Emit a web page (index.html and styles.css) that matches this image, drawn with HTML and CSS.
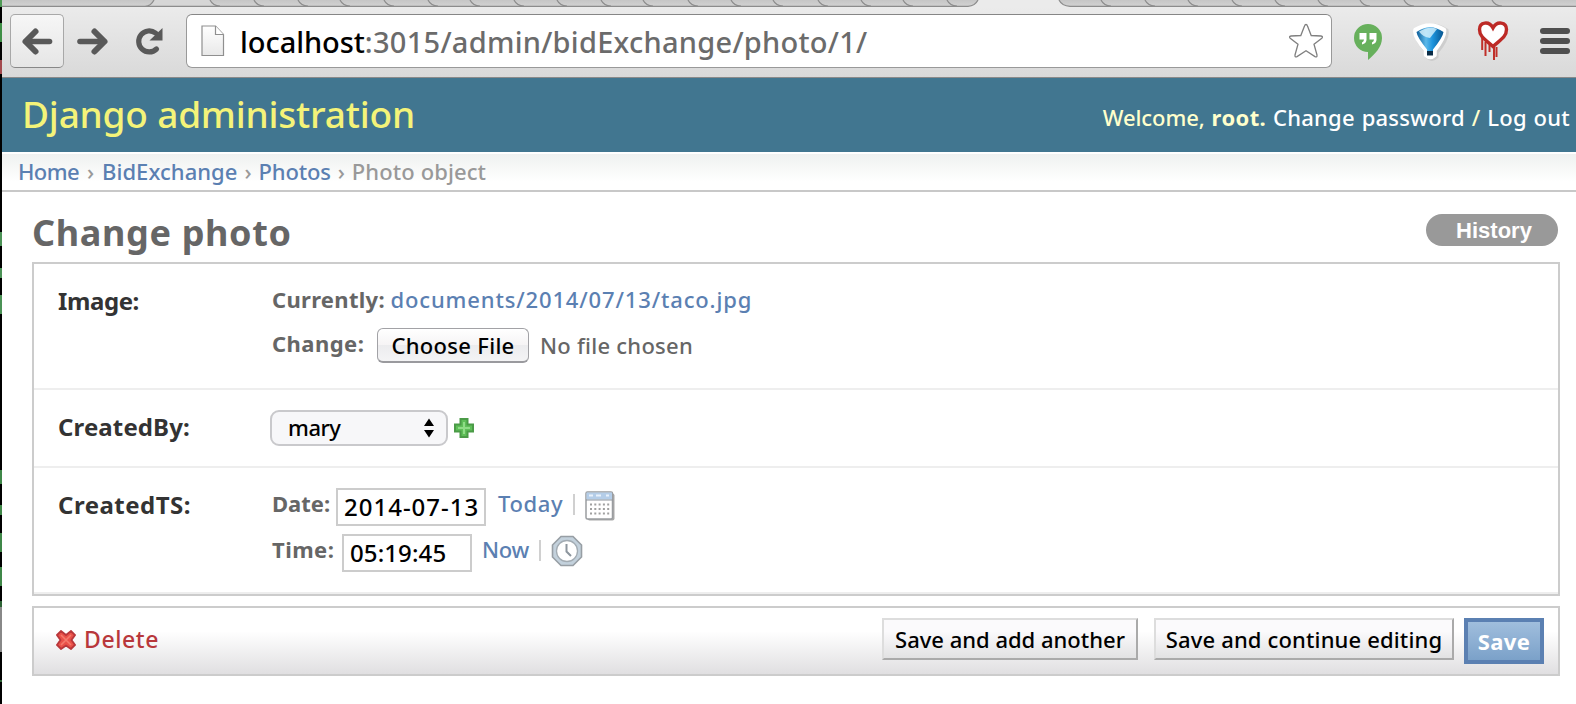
FILE: index.html
```html
<!DOCTYPE html>
<html lang="en">
<head>
<meta charset="utf-8">
<title>Change photo | Django site admin</title>
<link rel="stylesheet" href="styles.css">
</head>
<body>
<div class="shell">
  <div class="edge"></div>
  <div class="window">
    <svg class="tabs" viewBox="2 0 1574 7" width="1574" height="7">
      <defs>
        <linearGradient id="tab" x1="0" y1="0" x2="0" y2="1"><stop offset="0" stop-color="#c6c6c6"/><stop offset="1" stop-color="#d2d2d2"/></linearGradient>
      </defs>
      <rect x="2" y="0" width="1574" height="7" fill="#ebebeb"/>
      <path d="M2 0H154Q151 6 146 6.300H2Z" fill="url(#tab)"/>
      <path d="M146 6.300Q151 6 154 0H210Q214 6 220 6.300Z" fill="#d6d6d6"/>
      <path d="M210 0H978Q975 6 968 6.300H220Q213 6 210 0Z" fill="url(#tab)"/>
      <path d="M1059 0H1576V6.300H1070Q1062 6 1059 0Z" fill="url(#tab)"/>
      <g fill="none" stroke="#8c8c8c" stroke-width="1.200">
        <path d="M2 6.300H968Q975 6 978 0M154 0Q151 6 145 6.300M1059 0Q1062 6 1070 6.300H1576"/>
        <path d="M210 0q3 6 10 6M254 0q3 6 10 6M298 0q3 6 10 6M340 0q3 6 10 6M384 0q3 6 10 6M428 0q3 6 10 6M470 0q3 6 10 6M514 0q3 6 10 6M557 0q3 6 10 6M601 0q3 6 10 6M643 0q3 6 10 6M688 0q3 6 10 6M731 0q3 6 10 6M773 0q3 6 10 6M818 0q3 6 10 6M861 0q3 6 10 6M903 0q3 6 10 6M947 0q3 6 10 6M1101 0q3 6 10 6M1145 0q3 6 10 6M1188 0q3 6 10 6M1232 0q3 6 10 6M1275 0q3 6 10 6M1318 0q3 6 10 6M1360 0q3 6 10 6M1404 0q3 6 10 6M1448 0q3 6 10 6M1492 0q3 6 10 6"/>
      </g>
    </svg>
    <div class="toolbar">
      <div class="back">
        <svg viewBox="0 0 52 52" width="52" height="52" fill="none" stroke="#595959" stroke-width="5.600" stroke-linecap="round" stroke-linejoin="round"><path d="M15 26.500H38.500"/><path d="M24.500 16.500L14.500 26.500L24.500 36.500" stroke-width="6"/></svg>
      </div>
      <svg class="forward" viewBox="0 0 36 54" width="36" height="54" fill="none" stroke="#595959" stroke-width="5.600" stroke-linecap="round" stroke-linejoin="round"><path d="M5 27.500H29"/><path d="M19.500 17.500L29.500 27.500L19.500 37.500" stroke-width="6"/></svg>
      <svg class="reload" viewBox="0 0 34 54" width="34" height="54"><path d="M24.500 35A10.500 10.500 0 1 1 23.500 19" fill="none" stroke="#595959" stroke-width="5.200" stroke-linecap="round"/><path d="M30.500 14V26.500H17.500Z" fill="#595959"/></svg>
      <div class="address">
        <svg class="page" viewBox="0 0 24 32" width="24" height="32"><defs><linearGradient id="pg" x1="0" y1="0" x2="0" y2="1"><stop offset="0" stop-color="#fff"/><stop offset="1" stop-color="#e8e8e8"/></linearGradient></defs><path d="M1 1H14.500L22.500 9.500V30.500H1Z" fill="url(#pg)" stroke="#8f8f8f" stroke-width="1.200"/><path d="M14.500 1V9.500H22.500" fill="#fff" stroke="#8f8f8f" stroke-width="1.200"/></svg>
        <div class="url"><b>localhost</b>:3015/admin/bidExchange/photo/1/</div>
        <svg class="star" viewBox="0 0 36 36" width="36" height="36"><path d="M18 1.500Q19 1.500 19.500 3L23.200 12.500L33 13Q35.500 13.400 33.800 15.200L26 21.300L29 32Q29.300 34.600 27 33.600L18 27.800L9 33.600Q6.700 34.600 7 32L10 21.300L2.200 15.200Q.5 13.400 3 13L12.800 12.500L16.500 3Q17 1.500 18 1.500Z" fill="#fff" stroke="#808080" stroke-width="1.300"/></svg>
      </div>
      <svg class="hangouts" viewBox="0 0 30 40" width="30" height="40"><path d="M15 1A14 14 0 0 1 29 15C29 24 22 31 15 37V29A14 14 0 0 1 15 1Z" fill="#67b05c"/><path d="M6.500 10H13.500V17Q13.200 20.500 9 21.500V19.500Q11 18.500 11 16.500H6.500ZM16.500 10H23.500V17Q23.200 20.500 19 21.500V19.500Q21 18.500 21 16.500H16.500Z" fill="#fff"/></svg>
      <svg class="funnel" viewBox="0 0 40 42" width="40" height="42"><defs><linearGradient id="fn" x1="0" y1="0" x2="1" y2="0"><stop offset="0" stop-color="#0b5c98"/><stop offset=".35" stop-color="#5db9ea"/><stop offset=".6" stop-color="#1c93dc"/><stop offset="1" stop-color="#07558f"/></linearGradient></defs><path d="M5 8Q20 -2 35 8Q37 16 25 30V34Q20 39 16 34V30Q3 16 5 8Z" fill="#aaa" opacity=".35" stroke="#aaa" stroke-width="4" transform="translate(1.500 1.500)"/><path d="M5.500 9Q20 0 34 9Q35 16 24.500 29V34Q20 38 16 34V29Q4 16 5.500 9Z" fill="#fff" stroke="#fff" stroke-width="4.500" stroke-linejoin="round"/><path d="M6.500 11Q20 1.500 33.500 11Q33 16 23 28.500V34H17V28.500Q7 16 6.500 11Z" fill="url(#fn)"/><path d="M9 10.500Q19 4.500 27 8L20 17Q13 16 9 10.500Z" fill="#d9f2fd" opacity=".8"/><path d="M17 30H23V34.500H17Z" fill="#0a2c46"/></svg>
      <svg class="heart" viewBox="0 0 34 42" width="34" height="42"><path d="M6.200 18V30M9.500 22V36M13.500 25V32M18 27V40M20.500 27V37" fill="none" stroke="#c0302a" stroke-width="2"/><path d="M17 26.500C10 20 3.500 17 3.500 9.500C3.500 2 13 .5 17 8C21 .5 30.500 2 30.500 9.500C30.500 17 24 20 17 26.500Z" fill="#fff" stroke="#bd2a26" stroke-width="3.400"/></svg>
      <div class="menu"><i></i><i></i><i></i></div>
    </div>

    <div class="header">
      <div class="brand">Django administration</div>
      <div class="user-tools"><span class="welcome">Welcome,</span> <strong>root.</strong> <a>Change password</a> / <a class="logout">Log out</a></div>
    </div>
    <div class="breadcrumbs"><a class="home">Home</a><span class="sep first">›</span><a class="app">BidExchange</a><span class="sep">›</span><a class="model">Photos</a><span class="sep">›</span><span class="here">Photo object</span></div>

    <div class="content">
      <div class="title-row">
        <h1>Change photo</h1>
        <a class="history">History</a>
      </div>
      <div class="module">
        <div class="form-row row-image">
          <label class="image-label">Image:</label>
          <div class="field">
            <div class="current"><span class="hint currently">Currently:</span><a class="file-link">documents/2014/07/13/taco.jpg</a></div>
            <div class="upload"><span class="hint change">Change:</span><span class="choose">Choose File</span><span class="nofile">No file chosen</span></div>
          </div>
        </div>
        <div class="form-row row-user">
          <label>CreatedBy:</label>
          <div class="field picker">
            <div class="select"><span>mary</span><svg viewBox="0 0 10 20" width="10" height="20"><path d="M5 .5L10 8H0ZM5 19.500L10 12H0Z" fill="#000"/></svg></div>
            <svg class="plus" viewBox="0 0 20 20" width="20" height="20"><path d="M6.500 1H13.500V6.500H19V13.500H13.500V19H6.500V13.500H1V6.500H6.500Z" fill="#5fbf58" stroke="#4b9b47" stroke-width="2"/><path d="M10 4V16M4 10H16" stroke="#8fdc86" stroke-width="2"/></svg>
          </div>
        </div>
        <div class="form-row row-time">
          <label class="ts-label">CreatedTS:</label>
          <div class="field">
            <div class="line"><span class="hint date">Date:</span><span class="input date-input">2014-07-13</span><a class="today">Today</a><i class="bar"></i>
              <svg class="calendar" viewBox="0 0 30 30" width="30" height="30"><rect x="2.500" y="2.500" width="27" height="27" rx="2" fill="#a9a9a9"/><rect x="1" y="1" width="26.500" height="27" rx="1.500" fill="#fff" stroke="#9a9da0" stroke-width="1.500"/><rect x="1.500" y="1.500" width="25.500" height="7" fill="#b4cde8"/><path d="M4 4.500H8M11 4.500H16M21 4.500H24" stroke="#e8f1fb" stroke-width="2"/><path d="M1 9H27.500" stroke="#8d949b"/><path d="M5 13.500H25M5 18H25M5 22.500H25" stroke="#a0a0a0" stroke-width="2" stroke-dasharray="2 2.300"/></svg>
            </div>
            <div class="line"><span class="hint time">Time:</span><span class="input time-input">05:19:45</span><a class="now">Now</a><i class="bar"></i>
              <svg class="clock" viewBox="0 0 32 32" width="32" height="32"><path d="M10 1.500H22L30.500 10V22L22 30.500H10L1.500 22V10Z" fill="#c3d1dc" stroke="#979ea4" stroke-width="1.600"/><circle cx="16" cy="16" r="10.500" fill="#fff" stroke="#a3acb3" stroke-width="1.300"/><path d="M15.500 9V16.500L20 21" fill="none" stroke="#8d969e" stroke-width="2"/></svg>
            </div>
          </div>
        </div>
      </div>
      <div class="submit-row">
        <svg class="cross" viewBox="0 0 20 20" width="20" height="20"><path d="M1 5L5 1L10 5L15 1L19 5L15.500 10L19 15L15 19L10 15.500L5 19L1 15L4.500 10Z" fill="#ea5149" stroke="#b8373b" stroke-width="1.800"/><path d="M5 5L15 15M15 5L5 15" stroke="#f47a6d" stroke-width="1.600"/></svg>
        <a class="delete">Delete</a>
        <span class="btn another">Save and add another</span>
        <span class="btn continue">Save and continue editing</span>
        <span class="save">Save</span>
      </div>
    </div>
  </div>
</div>
</body>
</html>
```
FILE: styles.css
```css
* { box-sizing: border-box; }
body { margin: 0; background: #fff; font-family: "Noto Sans", "Open Sans", sans-serif; font-size: 22px; font-weight: 500; color: #666; white-space: nowrap; }
svg { display: block; flex: none; }
a { color: #5b80b2; }
.shell { display: flex; width: 1576px; height: 704px; overflow: hidden; }
.edge { flex: none; width: 2px; background: linear-gradient(#4f9a56 0 7px, #000 7px 23px, #3e8e46 23px 42px, #000 42px 60px, #a34a4e 60px 74px, #000 74px 232px, #4b9256 232px 246px, #000 246px 268px, #4b9256 268px 278px, #000 278px 295px, #4b9256 295px 314px, #000 314px 470px, #3f8748 470px 484px, #000 484px 505px, #3f8748 505px 515px, #000 515px 533px, #3f8748 533px 552px, #000 552px 567px, #3f8748 567px 586px, #000 586px 601px, #2d6335 601px 607px, #888 607px 652px, #000 652px 680px, #2d6335 680px 682px, #000 682px); }
.window { flex: none; width: 1574px; }

.toolbar { display: flex; align-items: flex-start; height: 71px; padding: 7px 0 0 8px; background: linear-gradient(#ebebeb, #d9d9d9); border-bottom: 1px solid #8a8a8a; }
.back { width: 54px; height: 54px; border: 1px solid #a8a8a8; border-bottom-color: #888; border-radius: 5px; background: linear-gradient(#f6f6f6, #e6e6e6); }
.forward { margin-left: 11px; }
.reload { margin-left: 21px; }
.address { display: flex; margin-left: 20px; width: 1146px; height: 54px; border: 1px solid #999; border-top-color: #868686; border-radius: 6px; background: #fff; }
.page { margin: 10px 0 0 14px; }
.url { margin-left: 15px; width: 1048px; font-size: 29px; line-height: 53px; letter-spacing: .26px; color: #6b6b6b; }
.url b { font-weight: 500; color: #000; letter-spacing: -.05px; }
.star { margin-top: 8px; }
.hangouts { margin: 9px 0 0 21px; }
.funnel { margin: 7px 0 0 27px; }
.heart { margin: 6px 0 0 26px; }
.menu { display: flex; flex-direction: column; gap: 4px; margin: 14px 0 0 30px; }
.menu i { width: 30px; height: 6px; border-radius: 3px; background: #4f4f4f; }

.header { display: flex; justify-content: space-between; height: 74px; background: #417690; color: #ffc; }
.brand { padding-left: 20px; font-size: 37px; line-height: 71px; letter-spacing: -.2px; color: #f4f379; }
.user-tools { padding-right: 6px; line-height: 79px; letter-spacing: .25px; word-spacing: .8px; }
.user-tools a { color: #fff; }
.user-tools strong { letter-spacing: .39px; }
.welcome { letter-spacing: -.05px; }

.breadcrumbs { height: 40px; padding-left: 16px; border-top: 2px solid #fff; border-bottom: 2px solid #c8c8c8; background: linear-gradient(#eff1f0, #fff 28px); line-height: 35px; color: #999; }
.sep { display: inline-block; width: 21px; text-align: center; }
.first { width: 23px; }
.home { letter-spacing: -.6px; }
.app { letter-spacing: .05px; }
.model { letter-spacing: -.15px; }
.here { letter-spacing: .1px; }

.content { padding: 10px 16px 0 30px; }
.title-row { display: flex; justify-content: space-between; height: 60px; }
h1 { margin: 0; font-size: 36px; line-height: 62px; letter-spacing: .65px; font-weight: 700; color: #666; }
.history { width: 132px; height: 32px; margin: 12px 2px 0 0; padding-left: 4px; border-radius: 16px; background: #999; color: #fff; font: bold 22px/33px "Liberation Sans", Arial, sans-serif; text-align: center; }

.module { border: 2px solid #ccc; }
.form-row { display: flex; padding-left: 24px; border-bottom: 2px solid #eee; }
.row-image { height: 126px; }
.row-user { height: 78px; }
.row-time { height: 126px; }
label { width: 213px; padding-top: 20px; font-size: 24px; line-height: 33px; font-weight: 700; letter-spacing: .12px; color: #333; }
.image-label { letter-spacing: -.4px; }
.ts-label { letter-spacing: .5px; }
.hint { flex: none; padding-left: 1px; font-weight: 700; letter-spacing: .45px; }
.current { display: flex; padding-top: 19px; line-height: 32px; }
.currently { width: 119.500px; letter-spacing: .3px; }
.file-link { letter-spacing: .85px; }
.upload { display: flex; padding-top: 13px; }
.change { width: 106px; line-height: 31px; }
.choose { width: 152px; height: 35px; border: 1px solid #a2a2a6; border-bottom: 2px solid #9a9a9e; border-radius: 6px; background: linear-gradient(#fff, #f6f4f5 50%, #ececee 51%, #f4f4f5); line-height: 33px; letter-spacing: .3px; text-align: center; color: #000; }
.nofile { margin-left: 11px; line-height: 34px; letter-spacing: .25px; }
.picker { display: flex; padding-top: 20px; }
.select { display: flex; justify-content: space-between; width: 178px; height: 36px; margin-left: -1px; padding: 0 12px 0 16px; border: 2px solid #c9c9cc; border-radius: 9px; background: #f7f7f9; color: #000; line-height: 31px; letter-spacing: -.45px; }
.select svg { margin-top: 6px; }
.plus { margin: 8px 0 0 6px; }
.line { display: flex; padding-top: 20px; line-height: 30px; }
.line + .line { padding-top: 8px; }
.date { width: 65px; letter-spacing: 0; }
.time { width: 71px; }
.input { height: 38px; border: 2px solid #ccc; padding-left: 6px; background: #fff; color: #000; font-size: 24px; line-height: 34px; }
.date-input { width: 150px; letter-spacing: 1px; }
.time-input { width: 130px; letter-spacing: .1px; }
.today { margin-left: 12px; width: 74.500px; letter-spacing: .6px; }
.now { margin-left: 10px; width: 56.500px; letter-spacing: -.3px; }
.bar { width: 2px; height: 21px; margin-top: 6px; background: #d0d0d0; }
.calendar { margin: 3px 0 0 10px; }
.clock { margin: 1px 0 0 10px; }

.submit-row { display: flex; height: 70px; margin-top: 10px; padding: 10px 14px 0 22px; border: 2px solid #ccc; background: linear-gradient(#fff 35%, #e0dfe1); }
.cross { margin-top: 12px; }
.delete { margin: 0 auto 0 8px; font-size: 23px; line-height: 42px; letter-spacing: .6px; color: #b8373b; }
.btn { height: 42px; border: 2px solid; border-color: #ddd #aaa #aaa #ddd; background: linear-gradient(#fbfafc 30%, #e2e2e3); line-height: 39px; text-align: center; color: #000; }
.another { width: 256px; margin-right: 16px; letter-spacing: 0; }
.continue { width: 300px; margin-right: 10px; letter-spacing: .15px; }
.save { width: 80px; height: 46px; border: 4px solid #5b80b2; background: linear-gradient(#a0bedd, #7ba1c9); line-height: 39px; font-weight: 700; text-align: center; letter-spacing: .38px; color: #fff; }
```
